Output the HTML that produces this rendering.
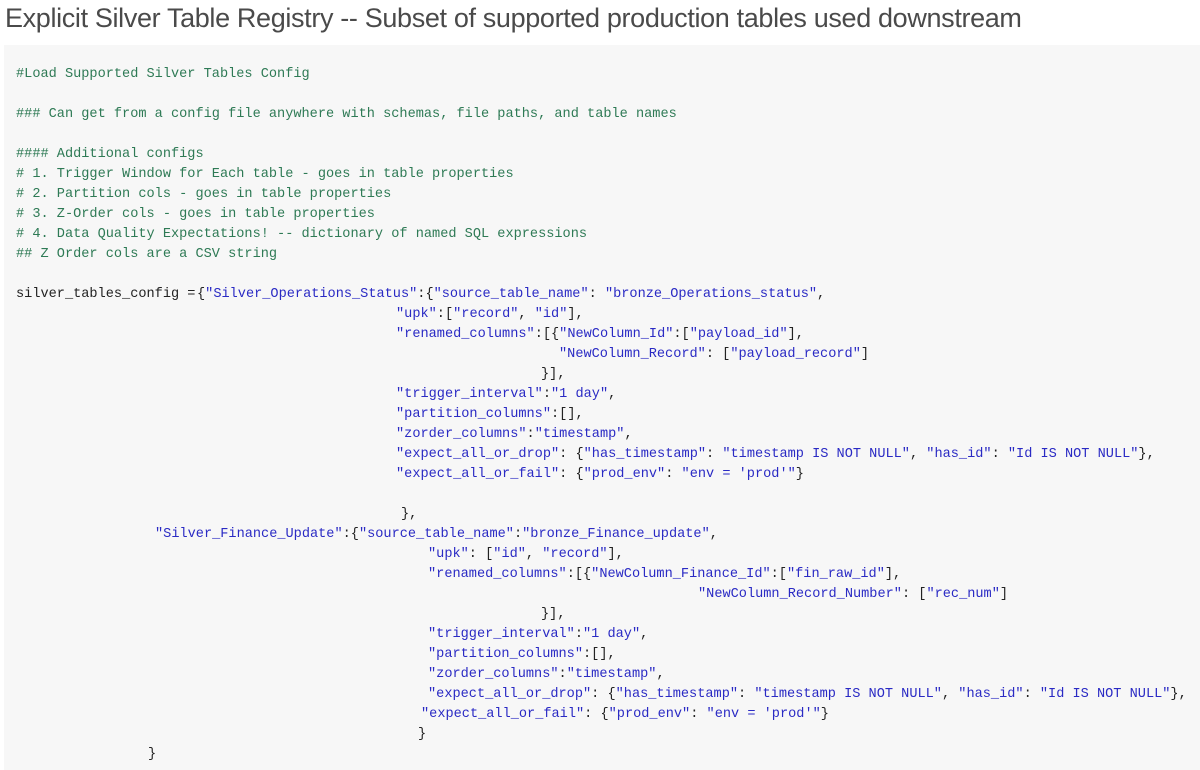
<!DOCTYPE html>
<html><head><meta charset="utf-8"><style>
body{margin:0;width:1200px;height:770px;background:#fff;overflow:hidden;position:relative;font-family:"Liberation Sans",sans-serif}
h1{position:absolute;left:5px;top:3px;margin:0;font-weight:300;font-size:27px;color:#4a4a4a;letter-spacing:-0.35px;white-space:nowrap}
.code{position:absolute;left:4px;top:45px;width:1196px;height:725px;background:#f7f7f7}
.l{position:absolute;font-family:"Liberation Mono",monospace;font-size:13.6px;line-height:20px;white-space:pre;color:#222;margin-top:2px}
.c{color:#2e7a55}.s{color:#2a2ac4}
</style></head><body>
<h1>Explicit Silver Table Registry -- Subset of supported production tables used downstream</h1>
<div class="code"></div>
<div class="l c" style="left:16px;top:63px">#Load Supported Silver Tables Config</div>
<div class="l c" style="left:16px;top:103px">### Can get from a config file anywhere with schemas, file paths, and table names</div>
<div class="l c" style="left:16px;top:143px">#### Additional configs</div>
<div class="l c" style="left:16px;top:163px"># 1. Trigger Window for Each table - goes in table properties</div>
<div class="l c" style="left:16px;top:183px"># 2. Partition cols - goes in table properties</div>
<div class="l c" style="left:16px;top:203px"># 3. Z-Order cols - goes in table properties</div>
<div class="l c" style="left:16px;top:223px"># 4. Data Quality Expectations! -- dictionary of named SQL expressions</div>
<div class="l c" style="left:16px;top:243px">## Z Order cols are a CSV string</div>
<div class="l" style="left:16px;top:283px">silver_tables_config =</div>
<div class="l" style="left:197px;top:283px">{<span class="s">"Silver_Operations_Status"</span>:{<span class="s">"source_table_name"</span>: <span class="s">"bronze_Operations_status"</span>,</div>
<div class="l" style="left:396px;top:303px"><span class="s">"upk"</span>:[<span class="s">"record"</span>, <span class="s">"id"</span>],</div>
<div class="l" style="left:396px;top:323px"><span class="s">"renamed_columns"</span>:[{<span class="s">"NewColumn_Id"</span>:[<span class="s">"payload_id"</span>],</div>
<div class="l" style="left:559px;top:343px"><span class="s">"NewColumn_Record"</span>: [<span class="s">"payload_record"</span>]</div>
<div class="l" style="left:541px;top:363px">}],</div>
<div class="l" style="left:396px;top:383px"><span class="s">"trigger_interval"</span>:<span class="s">"1 day"</span>,</div>
<div class="l" style="left:396px;top:403px"><span class="s">"partition_columns"</span>:[],</div>
<div class="l" style="left:396px;top:423px"><span class="s">"zorder_columns"</span>:<span class="s">"timestamp"</span>,</div>
<div class="l" style="left:396px;top:443px"><span class="s">"expect_all_or_drop"</span>: {<span class="s">"has_timestamp"</span>: <span class="s">"timestamp IS NOT NULL"</span>, <span class="s">"has_id"</span>: <span class="s">"Id IS NOT NULL"</span>},</div>
<div class="l" style="left:396px;top:463px"><span class="s">"expect_all_or_fail"</span>: {<span class="s">"prod_env"</span>: <span class="s">"env = 'prod'"</span>}</div>
<div class="l" style="left:401px;top:503px">},</div>
<div class="l" style="left:155px;top:523px"><span class="s">"Silver_Finance_Update"</span>:{<span class="s">"source_table_name"</span>:<span class="s">"bronze_Finance_update"</span>,</div>
<div class="l" style="left:428px;top:543px"><span class="s">"upk"</span>: [<span class="s">"id"</span>, <span class="s">"record"</span>],</div>
<div class="l" style="left:428px;top:563px"><span class="s">"renamed_columns"</span>:[{<span class="s">"NewColumn_Finance_Id"</span>:[<span class="s">"fin_raw_id"</span>],</div>
<div class="l" style="left:698px;top:583px"><span class="s">"NewColumn_Record_Number"</span>: [<span class="s">"rec_num"</span>]</div>
<div class="l" style="left:541px;top:603px">}],</div>
<div class="l" style="left:428px;top:623px"><span class="s">"trigger_interval"</span>:<span class="s">"1 day"</span>,</div>
<div class="l" style="left:428px;top:643px"><span class="s">"partition_columns"</span>:[],</div>
<div class="l" style="left:428px;top:663px"><span class="s">"zorder_columns"</span>:<span class="s">"timestamp"</span>,</div>
<div class="l" style="left:428px;top:683px"><span class="s">"expect_all_or_drop"</span>: {<span class="s">"has_timestamp"</span>: <span class="s">"timestamp IS NOT NULL"</span>, <span class="s">"has_id"</span>: <span class="s">"Id IS NOT NULL"</span>},</div>
<div class="l" style="left:421px;top:703px"><span class="s">"expect_all_or_fail"</span>: {<span class="s">"prod_env"</span>: <span class="s">"env = 'prod'"</span>}</div>
<div class="l" style="left:418px;top:723px">}</div>
<div class="l" style="left:148px;top:743px">}</div>
</body></html>
